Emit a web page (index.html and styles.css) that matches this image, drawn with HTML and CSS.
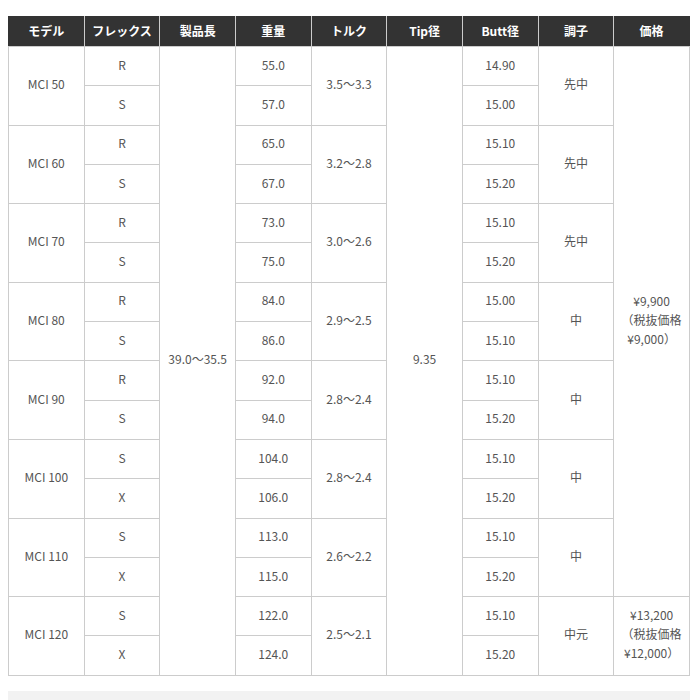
FILE: index.html
```html
<!DOCTYPE html>
<html lang="ja">
<head>
<meta charset="utf-8">
<link rel="stylesheet" href="styles.css">
</head>
<body>
<table class="spec">
  <colgroup>
    <col><col><col><col><col><col><col><col><col>
  </colgroup>
  <thead>
    <tr>
      <th>モデル</th><th>フレックス</th><th>製品長</th><th>重量</th><th>トルク</th><th>Tip径</th><th>Butt径</th><th>調子</th><th>価格</th>
    </tr>
  </thead>
  <tbody>
    <tr>
      <td rowspan="2">MCI 50</td><td>R</td>
      <td rowspan="16">39.0～35.5</td>
      <td>55.0</td><td rowspan="2">3.5～3.3</td>
      <td rowspan="16">9.35</td>
      <td>14.90</td><td rowspan="2">先中</td>
      <td rowspan="14" class="price">¥9,900<br>（税抜価格<br>¥9,000）</td>
    </tr>
    <tr><td>S</td><td>57.0</td><td>15.00</td></tr>

    <tr><td rowspan="2">MCI 60</td><td>R</td><td>65.0</td><td rowspan="2">3.2～2.8</td><td>15.10</td><td rowspan="2">先中</td></tr>
    <tr><td>S</td><td>67.0</td><td>15.20</td></tr>

    <tr><td rowspan="2">MCI 70</td><td>R</td><td>73.0</td><td rowspan="2">3.0～2.6</td><td>15.10</td><td rowspan="2">先中</td></tr>
    <tr><td>S</td><td>75.0</td><td>15.20</td></tr>

    <tr><td rowspan="2">MCI 80</td><td>R</td><td>84.0</td><td rowspan="2">2.9～2.5</td><td>15.00</td><td rowspan="2">中</td></tr>
    <tr><td>S</td><td>86.0</td><td>15.10</td></tr>

    <tr><td rowspan="2">MCI 90</td><td>R</td><td>92.0</td><td rowspan="2">2.8～2.4</td><td>15.10</td><td rowspan="2">中</td></tr>
    <tr><td>S</td><td>94.0</td><td>15.20</td></tr>

    <tr><td rowspan="2">MCI 100</td><td>S</td><td>104.0</td><td rowspan="2">2.8～2.4</td><td>15.10</td><td rowspan="2">中</td></tr>
    <tr><td>X</td><td>106.0</td><td>15.20</td></tr>

    <tr><td rowspan="2">MCI 110</td><td>S</td><td>113.0</td><td rowspan="2">2.6～2.2</td><td>15.10</td><td rowspan="2">中</td></tr>
    <tr><td>X</td><td>115.0</td><td>15.20</td></tr>

    <tr><td rowspan="2">MCI 120</td><td>S</td><td>122.0</td><td rowspan="2">2.5～2.1</td><td>15.10</td><td rowspan="2">中元</td>
      <td rowspan="2" class="price">¥13,200<br>（税抜価格<br>¥12,000）</td></tr>
    <tr><td>X</td><td>124.0</td><td>15.20</td></tr>
  </tbody>
</table>
<div class="footer-bar"></div>
</body>
</html>
```

FILE: styles.css
```css
html, body {
  margin: 0;
  padding: 0;
  background: #ffffff;
}

body {
  padding: 16px 8px 0 8px;
  font-family: "Noto Sans CJK JP", "Noto Sans", sans-serif;
  font-size: 12px;
  color: #555555;
}

.spec {
  width: 682px;
  table-layout: fixed;
  border-collapse: collapse;
}

.spec th {
  background: #333333;
  color: #ffffff;
  font-weight: bold;
  height: 27px;
  padding: 0 0 2px 0;
  border: 1px solid #cccccc;
  border-top-color: #333333;
  text-align: center;
  vertical-align: middle;
  font-size: 12px;
  line-height: 16px;
}

.spec th:first-child {
  border-left-color: #333333;
}

.spec th:last-child {
  border-right-color: #333333;
}

.spec td {
  height: 34.3px;
  padding: 0 0 4px 0;
  border: 1px solid #cccccc;
  text-align: center;
  vertical-align: middle;
  line-height: 19px;
}

.spec td.price {
  line-height: 19px;
}

.footer-bar {
  margin-top: 15px;
  width: 682px;
  height: 30px;
  background: #f2f2f2;
}
```
